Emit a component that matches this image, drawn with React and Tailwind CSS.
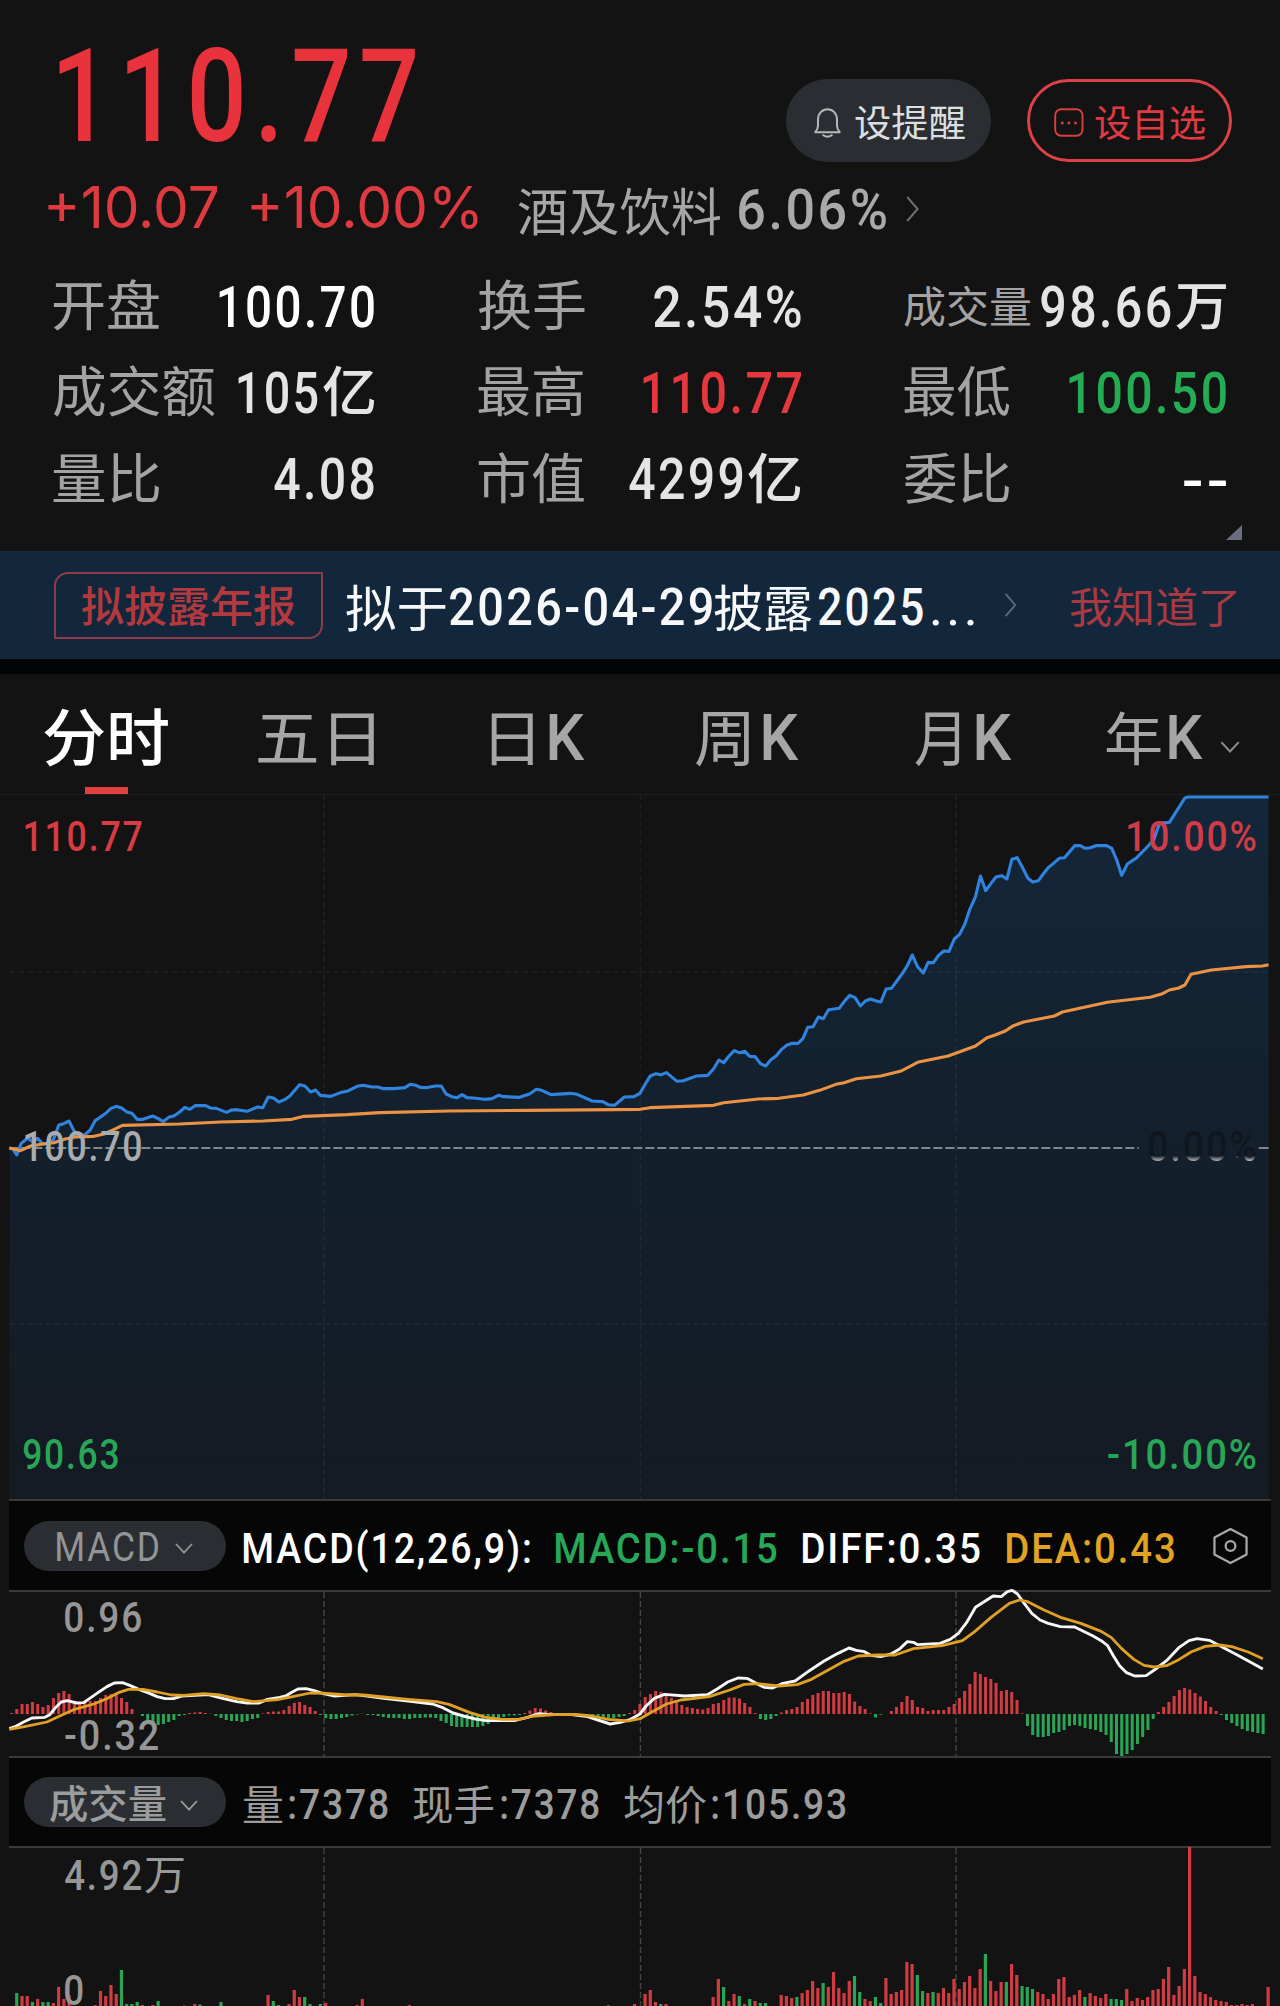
import React, { useLayoutEffect, useRef, useState } from "react";

/* Stretches a run of text horizontally so that its ink fills the box width. */
function Fit({ className = "", inner = "", children }) {
  const box = useRef(null);
  const run = useRef(null);
  const [transform, setTransform] = useState("none");
  useLayoutEffect(() => {
    const cs = getComputedStyle(run.current);
    const ctx = document.createElement("canvas").getContext("2d");
    ctx.font = `${cs.fontWeight} ${cs.fontSize} ${cs.fontFamily}`;
    const text = run.current.textContent;
    const spacing = parseFloat(cs.letterSpacing) || 0;
    const m = ctx.measureText(text);
    const ink =
      m.actualBoundingBoxLeft +
      m.actualBoundingBoxRight +
      spacing * (text.length - 1);
    const scale = box.current.clientWidth / ink;
    setTransform(
      `matrix(${scale}, 0, 0, 1, ${m.actualBoundingBoxLeft * scale}, 0)`
    );
  }, [children]);
  return (
    <span ref={box} className={"block shrink-0 leading-none " + className}>
      <span
        ref={run}
        className={"inline-block origin-left whitespace-nowrap " + inner}
        style={{ transform }}
      >
        {children}
      </span>
    </span>
  );
}

const Num = ({ className = "", children }) => (
  <Fit className={className} inner="tracking-[0.05em]">
    {children}
  </Fit>
);

const Han = ({ className = "", children }) => (
  <Fit className={"font-['Noto_Sans_CJK_SC',sans-serif] -translate-y-[0.06em] " + className}>
    {children}
  </Fit>
);

/* Plot coordinates: 3136 units across the page, 3 units per pixel down. */
const HALF = 1568;
const join = (a, b) => [...a, ...b.map(([x, y]) => [x + HALF, y])];
const pts = (list) => list.map((p) => p.join(",")).join(" ");

const PRICE = join(
  [[23,1104],[31,1106],[41,1125],[52,1090],[68,1074],[80,1085],[92,1075],[105,1092],[120,1090],[131,1078],[144,1035],[156,1031],[169,1023],[182,1054],[195,1070],[208,1064],[221,1050],[233,1022],[247,1010],[260,999],[272,985],[285,979],[298,984],[311,996],[323,1000],[336,1018],[350,1018],[374,1008],[388,1016],[400,1025],[413,1012],[427,1007],[440,996],[453,982],[465,988],[478,977],[504,977],[516,984],[530,985],[555,997],[567,990],[580,989],[605,994],[631,981],[644,983],[657,951],[670,954],[683,966],[697,959],[710,948],[734,914],[747,918],[761,936],[773,930],[785,946],[810,949],[836,937],[850,934],[875,919],[889,916],[912,921],[926,921],[940,926],[965,926],[992,923],[1005,913],[1019,916],[1030,922],[1043,923],[1067,918],[1081,918],[1093,942],[1107,950],[1120,953],[1132,944],[1144,953],[1160,954],[1187,958],[1205,956],[1221,946],[1235,950],[1273,952],[1297,942],[1314,928],[1327,931],[1350,944],[1397,940],[1414,943],[1451,963],[1477,965],[1490,974],[1505,976],[1530,951],[1553,950]],
  [[0,940],[13,912],[25,888],[39,881],[52,884],[65,878],[91,904],[106,902],[138,888],[166,886],[180,867],[193,840],[205,848],[218,828],[231,812],[243,818],[257,814],[269,829],[282,830],[295,851],[308,858],[320,840],[334,827],[347,808],[359,796],[373,790],[387,790],[399,776],[411,742],[424,740],[437,711],[449,716],[462,689],[488,685],[502,662],[514,646],[527,653],[540,678],[552,663],[565,657],[577,662],[590,666],[603,627],[616,625],[631,600],[643,580],[655,557],[667,525],[680,560],[694,579],[706,547],[719,548],[731,527],[744,513],[757,514],[770,477],[783,463],[796,432],[808,388],[822,350],[834,288],[847,332],[860,310],[872,291],[886,287],[899,297],[911,238],[924,233],[937,262],[950,294],[962,306],[976,302],[988,282],[1001,262],[1013,250],[1027,235],[1040,233],[1065,197],[1078,197],[1091,205],[1103,203],[1117,197],[1143,197],[1156,205],[1168,240],[1180,286],[1194,252],[1217,233],[1245,198],[1259,178],[1273,130],[1297,127],[1335,54],[1343,51],[1540,51]]
);

const AVERAGE = join(
  [[23,1104],[50,1112],[75,1098],[105,1092],[132,1088],[160,1077],[185,1071],[230,1069],[255,1062],[280,1048],[300,1036],[440,1032],[540,1026],[645,1023],[715,1018],[745,1009],[850,1004],[930,998],[1100,993],[1300,991]],
  [[0,988],[25,983],[180,976],[205,968],[290,957],[340,955],[400,945],[440,931],[480,913],[500,908],[530,896],[590,888],[640,873],[680,847],[755,828],[822,798],[850,773],[870,765],[895,753],[915,737],[940,726],[1015,708],[1035,696],[1145,667],[1250,652],[1280,641],[1297,630],[1320,624],[1335,615],[1350,583],[1400,570],[1485,560],[1525,558],[1540,554]]
);

const DIFF = join(
  [[23,986],[40,978],[58,966],[78,954],[110,952],[122,944],[135,924],[150,906],[165,902],[188,909],[205,908],[220,895],[240,878],[262,860],[280,849],[300,848],[318,856],[340,868],[362,878],[385,890],[405,896],[425,896],[445,888],[510,884],[545,895],[580,905],[605,909],[635,909],[655,898],[685,892],[700,888],[715,877],[730,867],[750,866],[770,872],[790,880],[820,888],[870,884],[900,888],[940,895],[1000,903],[1060,912],[1085,923],[1110,939],[1135,948],[1165,957],[1190,962],[1260,962],[1290,953],[1320,941],[1350,944],[1400,944],[1440,950],[1465,960],[1495,972],[1520,967],[1545,958]],
  [[0,942],[15,918],[35,895],[60,883],[110,888],[165,884],[190,866],[215,846],[240,834],[262,835],[285,850],[305,862],[325,864],[350,850],[380,843],[415,812],[450,784],[485,760],[512,744],[530,751],[550,755],[565,766],[590,770],[615,762],[635,748],[655,725],[670,727],[680,734],[735,730],[760,718],[780,700],[800,668],[822,622],[845,604],[865,588],[885,590],[900,575],[912,571],[925,582],[940,608],[960,640],[980,660],[1000,670],[1030,680],[1065,681],[1085,693],[1110,708],[1130,722],[1145,736],[1160,768],[1175,797],[1192,818],[1212,828],[1240,827],[1260,810],[1290,782],[1320,743],[1345,722],[1365,716],[1395,721],[1425,740],[1460,763],[1495,786],[1526,807]]
);

const DEA = join(
  [[23,988],[60,980],[115,966],[145,949],[180,929],[230,912],[260,897],[290,878],[315,868],[350,868],[385,876],[420,885],[450,886],[500,881],[540,885],[580,896],[620,905],[680,899],[720,889],[760,879],[800,880],[850,885],[890,885],[940,891],[1000,898],[1070,905],[1100,913],[1150,937],[1190,952],[1230,958],[1270,958],[1310,948],[1360,944],[1410,943],[1450,948],[1490,958],[1540,963]],
  [[0,956],[30,935],[65,912],[100,900],[170,890],[220,870],[255,853],[290,851],[340,858],[385,854],[420,838],[460,811],[500,784],[535,768],[580,765],[625,765],[670,746],[740,737],[790,722],[820,695],[860,652],[905,610],[930,600],[950,605],[990,630],[1030,652],[1080,670],[1130,694],[1155,713],[1180,746],[1210,778],[1235,796],[1260,801],[1290,797],[1320,779],[1350,756],[1385,739],[1420,735],[1450,740],[1490,756],[1526,776]]
);

/* One histogram value per minute, in pixels above or below the zero line. */
const HIST = [
  1,5,10,10,12,10,7,9,16,21,23,20,13,10,12,13,13,16,19,20,20,16,12,5,0,-2,-6,-9,-11,-10,-8,-6,-2,-1,1,1.5,2,1,0.3,-2,
  -4,-6,-7,-7,-8,-7,-5,-4,0.5,2,2.5,2.5,4,8,11,12,9,7,3,-1,-4,-5,-5,-4,-3,-1.5,-0.5,0.3,-1,-1,-2,-3,-4,-4,-4,-5,-5,-4,-4,-3.5,
  -3.5,-4,-7,-9,-12,-13,-13,-13,-13,-13,-12,-10,-8,-5,-3,-1.5,-1.5,-1,1,3.5,6,5.5,3.5,2,1,0.5,0,-0.5,-1,-1,-1,-2,-2.5,-3,-4,-4,-3,-2,1,4,
  10,17,20,23,22,19,16,14,9,7,6,5,4.5,6,10,11,14,16.5,16.5,15.5,11,7,1,-5,-6,-5,-2,1.5,4,5,7,12,15,19,21,23,23,21,21,22,
  20,12.5,8,5,0.7,-3.5,-0.7,0,3,7,12,18,14,7,6,3,4,4,4,7,10,16,23,30,42,40,37,35,31,23,24,22,14,0.7,-12,-21,-23,-23,-22,-19,
  -18,-16,-12,-11,-12,-14,-15,-16,-18,-21,-28,-40,-42,-40,-36,-30,-23,-16,-5,2,7,12,18,24,26,24.5,21,17.5,13,7,3,-1,-6,-9,-12,-15,-17,-18,-19,-20,
];

/* Volume per minute in pixels; negative marks a falling minute. */
const VOLUME = [
  0,-13,10,10,-4,7,-4,-4,3,19,7,11,0,0,0,0,1,15,10,21,12,-36,-2,-2,-4,1,0,1,-5,0,0,0,0,0.5,0,2,-1.5,0,0,0,
  -4,0,0,0,0,0,0,0,0,11,-5,-1,0,2,16,9,-9,-2,0,-2,3,0,0,0,0,0,1,7,0,0,0,0,0,0,0,0,1,0,0,0,
  0,0,0,0,0,0,0,0,0,0,0,0,0,0,0,0,0,0,0,0,0,0,0,0,0,0,0,0,0,0,0,0,0,0,-0.7,0,0,0,0,2,
  0,12,16,4,-2,2,0,0,0,0,0,0,0,0,9,27,-19,5,12,-10,2,-7,5,-3,-3,0,0,11,10,8,-9,13,16,25,18,-23,19,34,18,13,
  25,-30,-14,7,5,-9,-3,28,12,14,16,44,42,-31,-15,13,-14,13,18,13,27,17,24,30,18,37,-52,25,15,24,-24,42,31,-20,-19,-17,14,12,7,12,
  27,29,9,11,16,-9,13,10,8,12,-7,-7,-6,17,5,8,6,9,16,17,27,39,11,20,37,159,30,14,12,9,6,5,4,1,1,2,1,2,0,0,19,
];

const RED = "#d03c42";
const GREEN = "#29a555";
const line = { fill: "none", vectorEffect: "non-scaling-stroke", strokeLinejoin: "round" };

function PriceChart() {
  return (
    <div className="relative h-[705px] border-t border-[#1e1e1e]">
      <svg className="-mt-px block h-[705px] w-full" viewBox="0 42 3136 2115" preserveAspectRatio="none">
        <defs>
          <linearGradient id="area" x1="0" y1="0" x2="0" y2="1">
            <stop offset="0" stopColor="#14263a" />
            <stop offset="0.5" stopColor="#13202c" />
            <stop offset="1" stopColor="#151a23" />
          </linearGradient>
        </defs>
        <polygon points={`23,2157 ${pts(PRICE)} 3108,2157`} fill="url(#area)" />
        <g stroke="#ffffff" strokeOpacity="0.055" strokeDasharray="6 3">
          {[794, 1569, 2342].map((x) => (
            <line key={x} x1={x} x2={x} y1="42" y2="2157" {...line} strokeWidth="1.5" />
          ))}
          {[576, 1632].map((y) => (
            <line key={y} x1="23" x2="3108" y1={y} y2={y} {...line} strokeWidth="1.5" />
          ))}
        </g>
        <line x1="23" x2="2790" y1="1104" y2="1104" {...line} stroke="#7d8890" strokeWidth="2" strokeDasharray="9 3" />
        <line x1="3084" x2="3108" y1="1104" y2="1104" {...line} stroke="#7d8890" strokeWidth="2" />
        <polyline points={pts(PRICE)} {...line} stroke="#3084e0" strokeWidth="3.1" />
        <polyline points={pts(AVERAGE)} {...line} stroke="#ec9243" strokeWidth="3.1" />
      </svg>
      <Num className="absolute left-[25px] top-[21px] w-[117px] text-[42px] font-medium text-[#d93b42]">110.77</Num>
      <Num className="absolute left-[1128px] top-[21px] w-[128px] text-[42px] font-medium text-[#cf3c48]">10.00%</Num>
      <Num className="absolute left-[25px] top-[331px] w-[116px] text-[42px] font-medium text-[#a9abad]">100.70</Num>
      <Num className="absolute left-[1149px] top-[331px] w-[107px] text-[42px] font-medium text-[#10161d]">0.00%</Num>
      <div className="absolute left-[1140px] top-[331px] h-[42px] w-[124px] [mask-image:linear-gradient(to_bottom,transparent_70%,black_86%)]">
        <Num className="ml-[9px] w-[107px] text-[42px] font-medium text-[#d8dadc]">0.00%</Num>
      </div>
      <Num className="absolute left-[23px] top-[639px] w-[95px] text-[42px] font-medium text-[#27a656]">90.63</Num>
      <Num className="absolute left-[1108px] top-[639px] w-[148px] text-[42px] font-medium text-[#27a656]">-10.00%</Num>
    </div>
  );
}

function Down({ className }) {
  return (
    <svg className={"shrink-0 " + className} viewBox="0 0 18 11" fill="none" stroke="currentColor" strokeWidth="1.8">
      <path d="M1 1l8 8.6L17 1" />
    </svg>
  );
}

function Right({ className }) {
  return (
    <svg className={"shrink-0 " + className} viewBox="0 0 13 26" fill="none" stroke="currentColor" strokeWidth="2">
      <path d="M1.2 1l10.4 12L1.2 25" />
    </svg>
  );
}

function MacdPanel() {
  return (
    <div className="relative h-[164px]">
      <svg className="block h-[164px] w-full overflow-visible" viewBox="0 576 3136 492" preserveAspectRatio="none">
        {[794, 1569, 2342].map((x) => (
          <line key={x} x1={x} x2={x} y1="576" y2="1068" {...line} stroke="#454545" strokeWidth="1.4" strokeDasharray="6 3" />
        ))}
        {HIST.map((v, k) => (
          <rect
            key={k}
            x={24.6 + 12.83 * k}
            width="7.4"
            y={v > 0 ? 942 - v * 3 : 942}
            height={Math.abs(v) * 3}
            fill={v > 0 ? RED : GREEN}
          />
        ))}
      </svg>
      <Num className="absolute left-[65px] top-[4px] w-[76px] text-[43px] font-medium text-[#969696]">0.96</Num>
      <Num className="absolute left-[65px] top-[122px] w-[93px] text-[43px] font-medium text-[#969696]">-0.32</Num>
      <svg className="absolute inset-0 h-[164px] w-full overflow-visible" viewBox="0 576 3136 492" preserveAspectRatio="none">
        <polyline points={pts(DIFF)} {...line} stroke="#f7f7f7" strokeWidth="2.9" />
        <polyline points={pts(DEA)} {...line} stroke="#e0a024" strokeWidth="2.8" />
      </svg>
    </div>
  );
}

function VolumePanel() {
  return (
    <div className="relative h-[158px]">
      <svg className="block h-[158px] w-full overflow-visible" viewBox="0 0 1280 158">
        {[324, 640.5, 956].map((x) => (
          <line key={x} x1={x} x2={x} y1="0" y2="158" stroke="#454545" strokeWidth="1.4" strokeDasharray="6 3" />
        ))}
        {VOLUME.map((v, k) => (
          <rect
            key={k}
            x={9.9 + 5.236 * k}
            width="3.2"
            y={158 - Math.abs(v)}
            height={Math.abs(v)}
            fill={v > 0 ? RED : GREEN}
          />
        ))}
      </svg>
      <Num className="absolute left-[65px] top-[6px] w-[76px] text-[43px] font-medium text-[#969696]">4.92</Num>
      <Han className="absolute left-[145px] top-[6px] w-[39px] text-[41px] text-[#9a9a9a]">万</Han>
      <Num className="absolute left-[65px] top-[121px] w-[18px] text-[43px] font-medium text-[#969696]">0</Num>
    </div>
  );
}

const LABEL = "text-[54px] text-[#a3a3a3] ";
const VALUE = "text-[57px] font-medium ";

function Stats() {
  return (
    <div className="grid h-[259px] translate-y-[1.5px] grid-cols-[425px_426px_429px] grid-rows-3">
      <div className="flex items-center justify-between pl-[53px] pr-[51px]">
        <Han className={LABEL + "w-[106px]"}>开盘</Han>
        <Num className={VALUE + "w-[155px] text-white"}>100.70</Num>
      </div>
      <div className="flex items-center justify-between pl-[53px] pr-[50px]">
        <Han className={LABEL + "w-[107px]"}>换手</Han>
        <Num className={VALUE + "w-[147px] text-[#e4e4e4]"}>2.54%</Num>
      </div>
      <div className="flex items-center justify-between pl-[53px] pr-[54px]">
        <Han className="w-[127px] text-[43px] text-[#a3a3a3]">成交量</Han>
        <div className="flex items-center gap-[5px]">
          <Num className={VALUE + "w-[130px] text-[#e4e4e4]"}>98.66</Num>
          <Han className="w-[50px] text-[52px] font-medium text-[#e4e4e4]">万</Han>
        </div>
      </div>
      <div className="flex items-center justify-between pl-[53px] pr-[50px]">
        <Han className={LABEL + "w-[162px]"}>成交额</Han>
        <div className="flex items-center gap-[5px]">
          <Num className={VALUE + "w-[80px] text-[#e4e4e4]"}>105</Num>
          <Han className="w-[52px] text-[54px] font-medium text-[#e4e4e4]">亿</Han>
        </div>
      </div>
      <div className="flex items-center justify-between pl-[53px] pr-[50px]">
        <Han className={LABEL + "w-[105px]"}>最高</Han>
        <Num className={VALUE + "w-[158px] text-[#e5383e]"}>110.77</Num>
      </div>
      <div className="flex items-center justify-between pl-[53px] pr-[54px]">
        <Han className={LABEL + "w-[106px]"}>最低</Han>
        <Num className={VALUE + "w-[157px] text-[#24ac55]"}>100.50</Num>
      </div>
      <div className="flex items-center justify-between pl-[53px] pr-[51px]">
        <Han className={LABEL + "w-[106px]"}>量比</Han>
        <Num className={VALUE + "w-[100px] text-[#e4e4e4]"}>4.08</Num>
      </div>
      <div className="flex items-center justify-between pl-[53px] pr-[50px]">
        <Han className={LABEL + "w-[106px]"}>市值</Han>
        <div className="flex items-center gap-[5px]">
          <Num className={VALUE + "w-[114px] text-[#e4e4e4]"}>4299</Num>
          <Han className="w-[53px] text-[54px] font-medium text-[#e4e4e4]">亿</Han>
        </div>
      </div>
      <div className="flex items-center justify-between pl-[53px] pr-[54px]">
        <Han className={LABEL + "w-[105px]"}>委比</Han>
        <Num className={VALUE + "mt-[3px] w-[42px] text-white"}>--</Num>
      </div>
    </div>
  );
}

export default function App() {
  return (
    <main className="h-[2006px] w-[1280px] overflow-hidden bg-[#131313] font-['Roboto','Noto_Sans_CJK_SC',sans-serif]">
      <header className="flex h-[172px] items-start">
        <Fit className="ml-[59px] mt-[32px] w-[356px] text-[129px] font-medium text-[#e9333c]" inner="tracking-[0.07em]">110.77</Fit>
        <button className="ml-[371px] mt-[79px] flex h-[83px] w-[205px] items-center rounded-full bg-[#2a2e32] pl-[28px]">
          <svg className="mt-1 h-[30px] w-[27px] shrink-0" viewBox="0 0 27 30" fill="none" stroke="#b5b8ba" strokeWidth="2">
            <path d="M1.3 24.2h24.4c-1.8-2-2.7-4-2.7-7v-5.700C23 5.500 18.800 1.200 13.500 1.200S4 5.500 4 11.500v5.700c0 3-.9 5-2.700 7z" strokeLinejoin="round" />
            <path d="M8.600 26.600c2.500 2.700 7.300 2.700 9.800 0" />
          </svg>
          <Han className="ml-[14px] mt-[5px] w-[110px] text-[37px] text-[#dcdfe0]">设提醒</Han>
        </button>
        <button className="ml-[36px] mt-[79px] flex h-[83px] w-[205px] items-center rounded-full border-[3px] border-[#dc4148] pl-[24px]">
          <svg className="mt-1 h-[29px] w-[30px] shrink-0" viewBox="0 0 30 29" fill="none" stroke="#d8403f" strokeWidth="1.9">
            <rect x="1.200" y="1.200" width="27.300" height="26.600" rx="6" />
            <path d="M7 15h2.600M13.600 15h2.600M20.200 15h2.600" strokeWidth="2.600" />
          </svg>
          <Han className="ml-[11px] mt-[5px] w-[110px] text-[37px] text-[#e03a42]">设自选</Han>
        </button>
      </header>

      <div className="mb-[16px] flex h-[74px] items-center">
        <Fit className="ml-[48px] -mt-[4px] w-[170px] font-['Inter',sans-serif] text-[58px] text-[#de3a40]">+10.07</Fit>
        <Fit className="ml-[33px] -mt-[4px] w-[227px] font-['Inter',sans-serif] text-[58px] text-[#de3a40]">+10.00%</Fit>
        <Han className="ml-[40px] mt-[6px] w-[203px] text-[51px] text-[#a6a6a6]">酒及饮料</Han>
        <Num className="ml-[18px] mt-[2px] w-[147px] text-[56px] font-medium text-[#a9a9a9]">6.06%</Num>
        <Right className="ml-[20px] h-[26px] w-[13px] text-[#6e6e6e]" />
      </div>

      <Stats />
      <div className="flex h-[30px] justify-end pr-[38px] pt-[4px]">
        <svg className="h-[15px] w-[16px]" viewBox="0 0 16 15">
          <path d="M16 0v15H0z" fill="#6a6c80" />
        </svg>
      </div>

      <div className="flex h-[108px] items-center border-y border-[#1d2c3a] bg-[#12263c]">
        <div className="ml-[54px] flex h-[67px] w-[269px] items-center justify-center rounded-br-[14px] rounded-tl-[14px] border-2 border-[#8d3b46]">
          <Han className="mt-[4px] w-[213px] text-[42px] font-medium text-[#b2393e]">拟披露年报</Han>
        </div>
        <Han className="ml-[23px] mt-[5px] w-[100px] text-[50px] text-[#f6f8fa]">拟于</Han>
        <Num className="ml-[4px] mt-[6px] w-[262px] text-[52px] font-medium text-[#f6f8fa]">2026-04-29</Num>
        <Han className="ml-[2px] mt-[5px] w-[98px] text-[50px] text-[#f6f8fa]">披露</Han>
        <Num className="ml-[7px] mt-[6px] w-[104px] text-[52px] font-medium text-[#f6f8fa]">2025</Num>
        <Num className="ml-[9px] mt-[6px] w-[42px] text-[52px] text-[#f6f8fa]">...</Num>
        <Right className="ml-[30px] h-[24px] w-[13px] text-[#5f6c78]" />
        <Han className="ml-[53px] mt-[5px] w-[167px] text-[42px] text-[#aa3a42]">我知道了</Han>
      </div>
      <div className="h-[15px] bg-[#030405]" />

      <nav className="flex h-[120px] flex-col">
        <div className="flex h-[113px] items-center pt-[15px] text-[#a6a6a6]">
          <Han className="ml-[44px] w-[124px] text-[62px] font-medium text-white">分时</Han>
          <Han className="ml-[90px] w-[116px] text-[61px]">五日</Han>
          <Han className="ml-[117px] w-[42px] text-[61px]">日</Han>
          <Num className="ml-[16px] w-[36px] text-[65px] font-medium">K</Num>
          <Han className="ml-[111px] w-[53px] text-[61px]">周</Han>
          <Num className="ml-[14px] w-[36px] text-[65px] font-medium">K</Num>
          <Han className="ml-[116px] w-[45px] text-[61px]">月</Han>
          <Num className="ml-[16px] w-[36px] text-[65px] font-medium">K</Num>
          <Han className="ml-[94px] w-[55px] text-[57px]">年</Han>
          <Num className="ml-[8px] w-[34px] text-[62px] font-medium">K</Num>
          <Down className="ml-[17px] mt-[17px] h-[12px] w-[20px] text-[#8c8c8c]" />
        </div>
        <div className="ml-[85px] h-[7px] w-[43px] bg-[#e0403f]" />
      </nav>

      <PriceChart />

      <div className="mx-[9px] flex h-[93px] items-center border-y-2 border-[#3a3a3a] bg-[#060606]">
        <button className="ml-[15px] flex h-[50px] w-[202px] items-center rounded-full bg-[#2a2e32] pl-[33px] text-[#929496]">
          <Num className="mt-[4px] w-[101px] text-[40px]">MACD</Num>
          <Down className="ml-[17px] mt-[6px] h-[11px] w-[18px]" />
        </button>
        <Num className="ml-[18px] mt-[7px] w-[286px] text-[42px] font-medium text-white">MACD(12,26,9):</Num>
        <Num className="ml-[26px] mt-[7px] w-[221px] text-[42px] font-medium text-[#27a859]">MACD:-0.15</Num>
        <Num className="ml-[26px] mt-[7px] w-[177px] text-[42px] font-medium text-white">DIFF:0.35</Num>
        <Num className="ml-[27px] mt-[7px] w-[167px] text-[42px] font-medium text-[#e2a222]">DEA:0.43</Num>
        <svg className="ml-[39px] h-[38px] w-[35px] shrink-0" viewBox="0 0 36 38" fill="none" stroke="#a8a8a8" strokeWidth="2.300">
          <path d="M18 1.400l16.500 8.800v17.600L18 36.600 1.500 27.800V10.200z" strokeLinejoin="round" />
          <circle cx="18" cy="19" r="5" />
        </svg>
      </div>
      <MacdPanel />

      <div className="mx-[9px] flex h-[92px] items-center border-y-2 border-[#3a3a3a] bg-[#060606] text-[#9c9c9c]">
        <button className="ml-[15px] flex h-[50px] w-[202px] items-center rounded-full bg-[#2a2e32] pl-[26px]">
          <Han className="mt-[2px] w-[116px] text-[39px] font-medium">成交量</Han>
          <Down className="ml-[14px] mt-[6px] h-[11px] w-[18px]" />
        </button>
        <Han className="ml-[17px] mt-[5px] w-[40px] text-[41px]">量</Han>
        <Num className="ml-[6px] mt-[5px] w-[99px] text-[43px] font-medium">:7378</Num>
        <Han className="ml-[25px] mt-[5px] w-[81px] text-[41px]">现手</Han>
        <Num className="ml-[7px] mt-[5px] w-[98px] text-[43px] font-medium">:7378</Num>
        <Han className="ml-[25px] mt-[5px] w-[82px] text-[41px]">均价</Han>
        <Num className="ml-[6px] mt-[5px] w-[134px] text-[43px] font-medium">:105.93</Num>
      </div>
      <VolumePanel />
    </main>
  );
}
